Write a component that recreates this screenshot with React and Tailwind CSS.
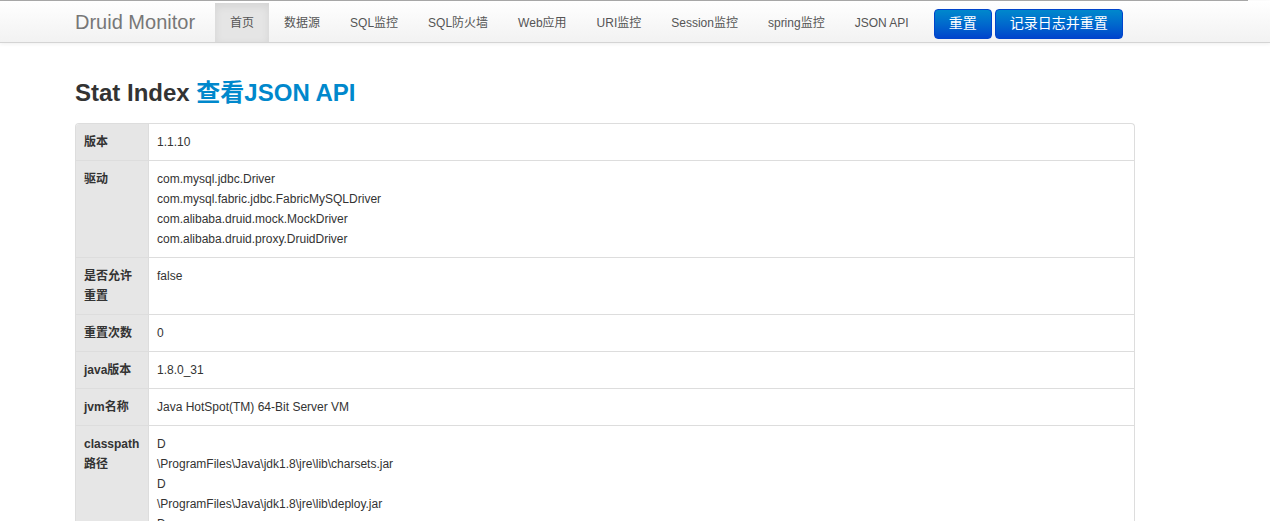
import React from "react";

const font = { fontFamily: '"Liberation Sans", Arial, "Noto Sans CJK SC", sans-serif' };

const navItems = ["首页", "数据源", "SQL监控", "SQL防火墙", "Web应用", "URI监控", "Session监控", "spring监控", "JSON API"];

const rows = [
  { label: "版本", lines: ["1.1.10"] },
  {
    label: "驱动",
    lines: [
      "com.mysql.jdbc.Driver",
      "com.mysql.fabric.jdbc.FabricMySQLDriver",
      "com.alibaba.druid.mock.MockDriver",
      "com.alibaba.druid.proxy.DruidDriver",
    ],
  },
  { label: "是否允许重置", lines: ["false"] },
  { label: "重置次数", lines: ["0"] },
  { label: "java版本", lines: ["1.8.0_31"] },
  { label: "jvm名称", lines: ["Java HotSpot(TM) 64-Bit Server VM"] },
  {
    label: "classpath路径",
    lines: [
      "D",
      "\\ProgramFiles\\Java\\jdk1.8\\jre\\lib\\charsets.jar",
      "D",
      "\\ProgramFiles\\Java\\jdk1.8\\jre\\lib\\deploy.jar",
      "D",
      "\\ProgramFiles\\Java\\jdk1.8\\jre\\lib\\ext\\access-bridge-64.jar",
    ],
  },
];

export default function App() {
  return (
    <div className="min-h-screen bg-white text-[#333]" style={font}>
      <div className="h-px w-[1248px] bg-[#aaaaaa]" />
      <div className="h-[42px] border-b border-[#d4d4d4] bg-gradient-to-b from-white to-[#f2f2f2] shadow-[0_1px_4px_rgba(0,0,0,0.065)]">
        <div className="flex h-full items-stretch pl-[75px]">
          <div className="flex items-center pr-5 text-[20px] text-[#777]">Druid Monitor</div>
          <div className="flex items-stretch pt-[2px]">
            {navItems.map((n, i) => (
              <div
                key={n}
                className={
                  "flex items-center px-[15px] text-[12px] text-[#555] " +
                  (i === 0 ? "bg-[#e5e5e5] shadow-[inset_0_3px_8px_rgba(0,0,0,0.08)]" : "")
                }
              >
                {n}
              </div>
            ))}
          </div>
          <div className="ml-[10px] flex items-center gap-[3px] pt-[4px]">
            <div className="flex h-[30px] w-[58px] items-center justify-center rounded-[4px] border border-[#0044cc] bg-gradient-to-b from-[#0088cc] to-[#0044cc] text-[14px] text-white">
              重置
            </div>
            <div className="flex h-[30px] w-[128px] items-center justify-center rounded-[4px] border border-[#0044cc] bg-gradient-to-b from-[#0088cc] to-[#0044cc] text-[14px] text-white">
              记录日志并重置
            </div>
          </div>
        </div>
      </div>

      <div className="pl-[75px] pt-[30px]">
        <h1 className="mb-[10px] text-[24px] font-bold leading-[40px] text-[#333]">
          Stat Index <span className="text-[#0088cc]">查看JSON API</span>
        </h1>
        <div className="w-[1060px] overflow-hidden rounded-t-[4px] border border-b-0 border-[#dddddd]">
          {rows.map((r, i) => (
            <div key={i} className={"flex " + (i > 0 ? "border-t border-[#dddddd]" : "")}>
              <div className="w-[72px] shrink-0 bg-[#e6e6e6] px-2 py-2 text-[12px] font-bold leading-[20px] text-[#333]">
                {r.label}
              </div>
              <div className="flex-1 border-l border-[#dddddd] px-2 py-2 text-[12px] leading-[20px] text-[#333]">
                {r.lines.map((l, j) => (
                  <div key={j}>{l}</div>
                ))}
              </div>
            </div>
          ))}
        </div>
      </div>
    </div>
  );
}
